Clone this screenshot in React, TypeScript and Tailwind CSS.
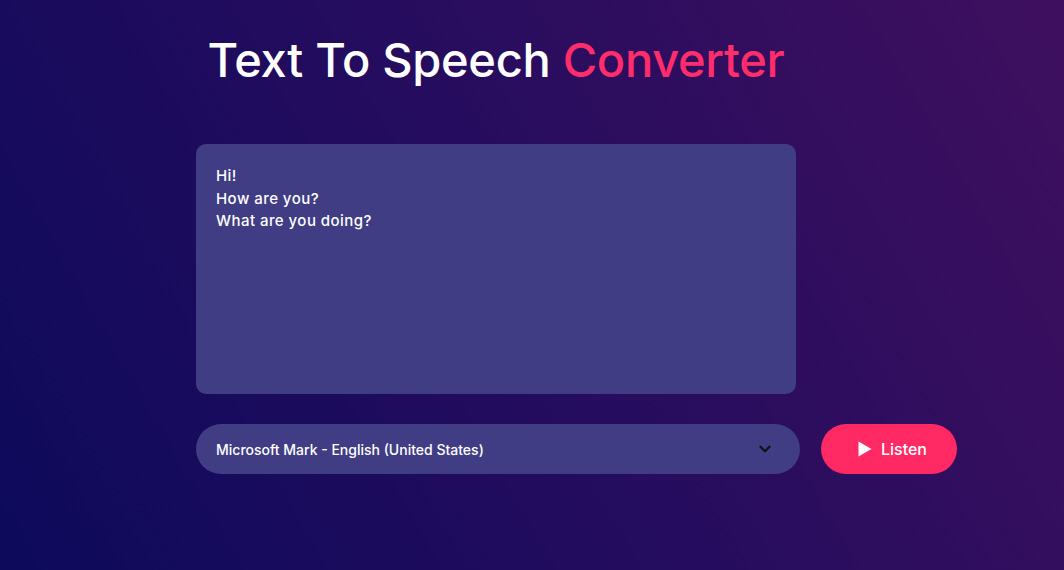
import { ChevronDown } from "lucide-react";

const font = { fontFamily: "Inter, 'Noto Sans', sans-serif" };

export default function App() {
  return (
    <div
      className="min-h-[570px] w-full bg-[linear-gradient(60deg,#0d0a5b_0%,#230c5e_45%,#3f0f5f_100%)]"
      style={font}
    >
      <div className="ml-[196px] w-[600px] pt-[30px]">
        <h1 className="text-center text-[47px] font-medium leading-[60px] tracking-[-0.3px] text-white">
          Text To Speech <span className="text-[#ff2d6b]">Converter</span>
        </h1>

        <textarea
          className="mt-[54px] block h-[250px] w-[600px] resize-none rounded-[10px] bg-[#403d84] px-5 pt-[21px] text-[15px] font-medium leading-[22.5px] tracking-[0.45px] text-white outline-none"
          defaultValue={"Hi!\nHow are you?\nWhat are you doing?"}
        />

        <div className="mt-[30px] flex w-[761px] items-center gap-[21px]">
          <div className="flex h-[50px] w-[604px] items-center justify-between rounded-full bg-[#403d84] pl-5 pr-[26px]">
            <span className="text-[14px] font-medium text-white">
              Microsoft Mark - English (United States)
            </span>
            <ChevronDown className="h-[18px] w-[18px] text-[#111]" strokeWidth={3} />
          </div>
          <button className="flex h-[50px] w-[136px] items-center justify-center gap-[9px] rounded-full bg-[#ff2963] pl-[7px] text-[16px] font-medium text-white">
            <svg viewBox="0 0 14 16" className="h-[16px] w-[14px]" fill="white">
              <path d="M0.5 0.5 L13.5 8 L0.5 15.5 Z" />
            </svg>
            Listen
          </button>
        </div>
      </div>
    </div>
  );
}
